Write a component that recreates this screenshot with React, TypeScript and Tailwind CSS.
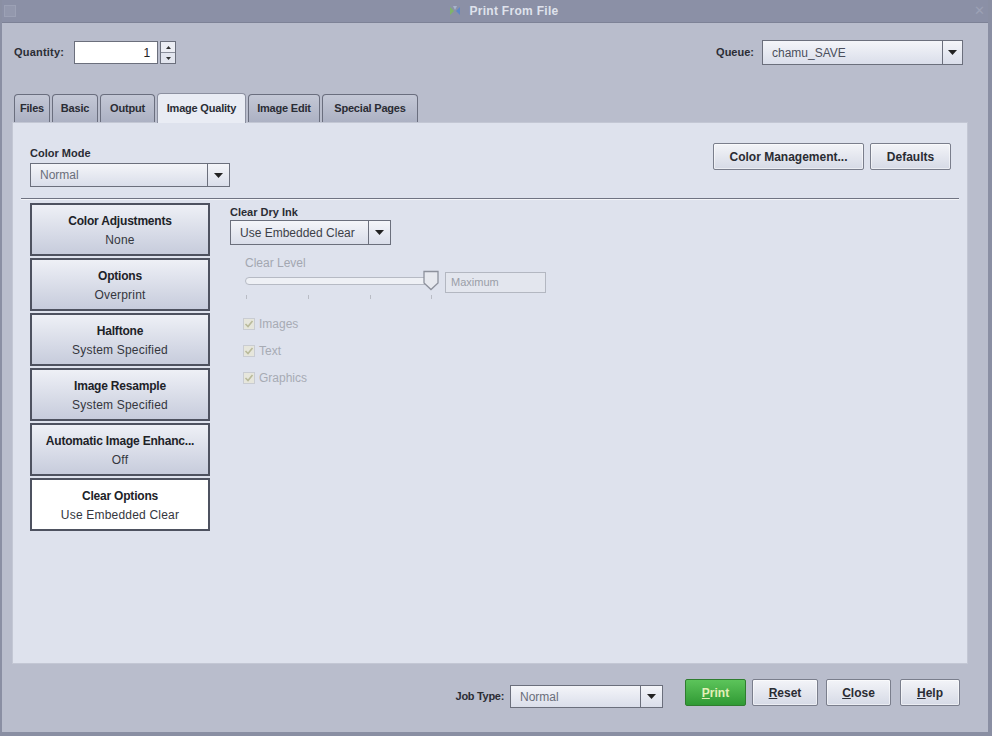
import React from "react";

const font = { fontFamily: '"Liberation Sans", Arial, sans-serif' };

function Arrow() {
  return (
    <svg width="9" height="5" viewBox="0 0 9 5">
      <path d="M0 0 H9 L4.5 5 Z" fill="#222" />
    </svg>
  );
}

function Combo({
  value,
  width,
  height = 24,
  arrowW = 22,
  textClass = "text-[#6a6e7a]",
}: {
  value: string;
  width: number;
  height?: number;
  arrowW?: number;
  textClass?: string;
}) {
  return (
    <div
      className="flex border border-[#6b6f7c] bg-gradient-to-b from-[#f4f5f9] to-[#dadeea] shrink-0"
      style={{ width, height }}
    >
      <div className={`flex-1 flex items-center pl-[9px] text-[12px] ${textClass}`}>{value}</div>
      <div
        className="flex items-center justify-center border-l border-[#6b6f7c]"
        style={{ width: arrowW }}
      >
        <Arrow />
      </div>
    </div>
  );
}

function Button({
  children,
  width,
  height = 27,
}: {
  children: React.ReactNode;
  width: number;
  height?: number;
}) {
  return (
    <div
      className="flex items-center justify-center border border-[#7a7e8c] rounded-[2px] bg-gradient-to-b from-[#f3f4f8] to-[#d6dae6] text-[12px] font-bold text-[#2a2c33] shadow-[inset_0_0_0_1px_#ffffff80] shrink-0"
      style={{ width, height }}
    >
      {children}
    </div>
  );
}

function SideButton({
  title,
  sub,
  active = false,
}: {
  title: string;
  sub: string;
  active?: boolean;
}) {
  return (
    <div
      className={`h-[53px] w-[180px] flex flex-col items-center justify-center gap-[6px] pt-[3px] border-2 border-[#4e5260] ${
        active ? "bg-white" : "bg-gradient-to-b from-[#eef0f6] to-[#c7ccdc]"
      }`}
    >
      <div className="text-[12px] leading-[13px] font-bold text-[#202228] tracking-[-0.2px]">{title}</div>
      <div className="text-[12px] leading-[13px] text-[#34363d] tracking-[0.2px]">{sub}</div>
    </div>
  );
}

function Check({ label }: { label: string }) {
  return (
    <div className="flex items-center gap-[4px] h-[13px]">
      <div className="w-[12px] h-[12px] border border-[#c9ccd2] bg-[#e6e6dc] flex items-center justify-center">
        <svg width="10" height="10" viewBox="0 0 10 10">
          <path d="M1.5 5 L4 7.5 L8.5 2" stroke="#b9ba9a" strokeWidth="1.6" fill="none" />
        </svg>
      </div>
      <span className="text-[12px] text-[#a7abb4]">{label}</span>
    </div>
  );
}

const tabs = ["Files", "Basic", "Output", "Image Quality", "Image Edit", "Special Pages"];
const tabW = [36, 46, 55, 89, 72, 96];

export default function App() {
  return (
    <div
      className="w-[992px] h-[736px] flex flex-col bg-[#b9bdcc] border-l-2 border-r-4 border-b-4 border-[#8a8fa3] overflow-hidden"
      style={font}
    >
      {/* Title bar */}
      <div className="h-[23px] shrink-0 bg-[#8b90a6] flex items-center justify-between px-[2px] border-b border-[#7d8296]">
        <div className="w-[12px] h-[12px] border border-[#9ca1b5] bg-[#9398ad]" />
        <div className="flex items-center gap-[8px] text-[12px] font-bold text-[#dfe2ec] tracking-[0.3px] ml-[20px]">
          <svg width="12" height="12" viewBox="0 0 12 12">
            <path d="M1 2 L5 6 L1 10 Z" fill="#7fb36a" />
            <path d="M11 2 L7 6 L11 10 Z" fill="#5f86c6" />
            <path d="M4 1 L8 1 L6 5 Z" fill="#a6b4cc" />
          </svg>
          Print From File
        </div>
        <div className="w-[14px] h-[14px] flex items-center justify-center text-[#9ca1b5] text-[13px]">✕</div>
      </div>

      {/* Quantity / Queue */}
      <div className="flex items-center justify-between pl-[12px] pr-[25px] mt-[17px] h-[25px] shrink-0">
        <div className="flex items-center">
          <span className="text-[11px] font-bold text-[#2b2d35] mr-[10px] tracking-[0.2px]">Quantity:</span>
          <div className="w-[84px] h-[23px] border border-[#6b6f7c] bg-white flex items-center justify-end pr-[7px] text-[12px] text-[#222]">
            1
          </div>
          <div className="ml-[2px] w-[16px] h-[23px] flex flex-col border border-[#6b6f7c]">
            <div className="flex-1 flex items-center justify-center bg-[#eceef4] border-b border-[#8a8e9a]">
              <svg width="5" height="3" viewBox="0 0 5 3"><path d="M0 3 H5 L2.5 0 Z" fill="#333" /></svg>
            </div>
            <div className="flex-1 flex items-center justify-center bg-[#e2e5ee]">
              <svg width="5" height="3" viewBox="0 0 5 3"><path d="M0 0 H5 L2.5 3 Z" fill="#333" /></svg>
            </div>
          </div>
        </div>
        <div className="flex items-center">
          <span className="text-[11px] font-bold text-[#2b2d35] mr-[8px]">Queue:</span>
          <Combo value="chamu_SAVE" width={201} height={25} arrowW={20} textClass="text-[#4b4f5c]" />
        </div>
      </div>

      {/* Tabs */}
      <div className="flex items-end pl-[12px] gap-[2px] mt-[27px] h-[30px] shrink-0">
        {tabs.map((t, i) => {
          const sel = t === "Image Quality";
          return (
            <div
              key={t}
              className={`flex items-center justify-center text-[11px] font-bold text-[#2a2c34] rounded-t-[4px] border border-b-0 tracking-[-0.2px] ${
                sel
                  ? "h-[30px] bg-[#e9ecf4] border-[#8c90a0] relative z-10 -mb-px"
                  : "h-[28px] bg-gradient-to-b from-[#c4c8d6] to-[#acb1c3] border-[#6a6e7e]"
              }`}
              style={{ width: tabW[i] }}
            >
              {t}
            </div>
          );
        })}
      </div>

      {/* Panel */}
      <div className="ml-[10px] mr-[20px] h-[542px] shrink-0 bg-[#dee2ed] border border-[#c3c7d4] flex flex-col">
        <div className="flex justify-between pl-[17px] pr-[16px] pt-[20px] h-[75px]">
          <div className="flex flex-col">
            <span className="text-[11px] font-bold text-[#2a2c34] leading-[13px] mt-[4px] mb-[3px]">Color Mode</span>
            <Combo value="Normal" width={200} />
          </div>
          <div className="flex gap-[6px]">
            <Button width={151}>Color Management...</Button>
            <Button width={81}>Defaults</Button>
          </div>
        </div>

        <div className="mx-[8px] h-[2px] bg-[#6f7382] border-b border-[#f4f5f9]" />

        <div className="flex pl-[17px] pt-[3px] gap-[20px]">
          <div className="flex flex-col gap-[2px]">
            <SideButton title="Color Adjustments" sub="None" />
            <SideButton title="Options" sub="Overprint" />
            <SideButton title="Halftone" sub="System Specified" />
            <SideButton title="Image Resample" sub="System Specified" />
            <SideButton title="Automatic Image Enhanc..." sub="Off" />
            <SideButton title="Clear Options" sub="Use Embedded Clear" active />
          </div>

          <div className="flex flex-col">
            <span className="text-[11px] font-bold text-[#2a2c34] leading-[13px] mt-[3px] mb-[1px]">Clear Dry Ink</span>
            <Combo value="Use Embedded Clear" width={161} height={25} arrowW={22} textClass="text-[#3c3f48]" />

            <div className="pl-[15px] flex flex-col">
              <span className="text-[12px] text-[#a3a7b1] mt-[11px] leading-[14px]">Clear Level</span>
              <div className="flex items-center h-[22px]">
                <div className="relative w-[196px] h-[22px]">
                  <div className="absolute left-0 top-[7px] w-[187px] h-[8px] rounded-[4px] border border-[#b6bac4] bg-[#eef0f5]" />
                  <svg className="absolute left-[177px] top-0" width="18" height="22" viewBox="0 0 18 22">
                    <path d="M2 1.5 H16 V13 L9 19.5 L2 13 Z" fill="#e7e9ef" stroke="#8d919c" strokeWidth="1.3" />
                  </svg>
                </div>
                <div className="w-[101px] h-[21px] border border-[#b3b7c1] bg-[#e3e6ee] flex items-center pl-[5px] text-[11px] text-[#9a9ea8] ml-[4px] mt-[2px]">
                  Maximum
                </div>
              </div>
              <div className="relative h-[10px] mt-[2px]">
                {[0, 62, 124, 185].map((x) => (
                  <div key={x} className="absolute top-[1px] w-px h-[4px] bg-[#b9bcc5]" style={{ left: x + 1 }} />
                ))}
              </div>
              <div className="flex flex-col gap-[14px] mt-[13px] -ml-[2px]">
                <Check label="Images" />
                <Check label="Text" />
                <Check label="Graphics" />
              </div>
            </div>
          </div>
        </div>
      </div>

      {/* Bottom bar */}
      <div className="flex items-center justify-end pr-[28px] mt-[13px]">
        <span className="text-[11px] font-bold text-[#2b2d35] mr-[6px] mt-[8px] tracking-[-0.3px]">Job Type:</span>
        <div className="mt-[8px] mr-[22px]">
          <Combo value="Normal" width={153} height={23} arrowW={22} />
        </div>
        <div className="w-[61px] h-[27px] flex items-center justify-center border border-[#2f7d2f] rounded-[2px] bg-gradient-to-b from-[#5cc45a] to-[#2f9a34] text-[12px] font-bold text-[#e3f0b8] mr-[6px]">
          <span><span className="underline">P</span>rint</span>
        </div>
        <div className="flex gap-[8px]">
          <Button width={66}><span><span className="underline">R</span>eset</span></Button>
          <Button width={65}><span><span className="underline">C</span>lose</span></Button>
          <div className="ml-[1px]">
            <Button width={60}><span><span className="underline">H</span>elp</span></Button>
          </div>
        </div>
      </div>
    </div>
  );
}
